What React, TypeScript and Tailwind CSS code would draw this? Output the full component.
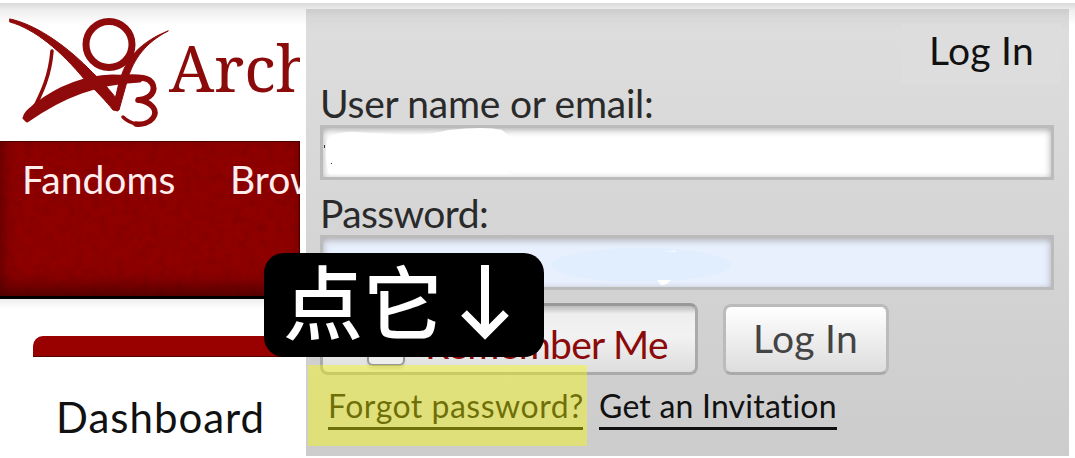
import type { ReactNode } from "react";

const ui = "font-['Lato','Liberation_Sans',sans-serif] whitespace-nowrap";

function Logo() {
  return (
    <svg className="block h-[112px] w-[164px] shrink-0" viewBox="8 16 164 112" fill="none" stroke="#8f0a0a" strokeLinecap="round" strokeLinejoin="round">
      <circle cx="109" cy="44.5" r="23" strokeWidth="7" />
      <path fill="#8f0a0a" strokeWidth="1" d="M10 19 C34 24 63 43 88 68 C101 81 111 90 120 104 L118 111 L113 110 C106 101 97 92 85 80 C61 51 35 29 10 22 Z" />
      <path fill="#8f0a0a" strokeWidth="1" d="M168 31 C145 43 134 59 128 78 L119 110 L113 107 L120 82 C124 59 142 41 168 31 Z" />
      <path strokeWidth="3.5" d="M52 51 C50 75 43 91 31 114" />
      <path fill="#8f0a0a" strokeWidth="3" d="M24 118 C25 113 29 110 35 105 C56 89 80 77 112 76 L144 77 L140 81 C97 83 64 95 27 121 Z" />
      <path strokeWidth="6" d="M112 79 C124 77 142 76 149 80 C157 86 155 98 139 100" />
      <path strokeWidth="5.5" d="M138 100 C153 102 158 111 153 118 C149 123 142 125 136 124" />
      <path strokeWidth="3.5" d="M137 124 C130 123 126 120 123 117" />
      <path strokeWidth="6" d="M101 83 L116 107 L121 85" />
    </svg>
  );
}

function Field({ label, labelClass, children, tint }: { label: string; labelClass: string; children?: ReactNode; tint?: boolean }) {
  return (
    <div className="h-[110px]">
      <div className={`${ui} ${labelClass} h-[41px] text-[39px] leading-[38px] text-[#2a2a2a]`}>{label}</div>
      <div className={`${tint ? "bg-[#e8effd]" : "bg-white"} h-[55px] w-[734px] overflow-hidden border-[3px] border-[#bbb] shadow-[inset_0_2px_7px_#aaa]`}>{children}</div>
    </div>
  );
}

export default function App() {
  return (
    <div className="relative h-[458px] w-[1075px] overflow-hidden bg-white pt-[3px]">
      <div className="flex h-[453px] bg-[linear-gradient(#d9d9d9,#eee_7px,#fff_22px)]">
        <div className="flex w-[300px] shrink-0 flex-col overflow-hidden">
          <header className="flex h-[138px] shrink-0 pt-[13px] pl-2">
            <Logo />
            <span className="-ml-[3px] pt-[12px] font-['Noto_Serif','Liberation_Serif',serif] text-[64px] leading-[80px] text-[#8b0a0a]">Archive</span>
          </header>
          <nav className="relative flex h-[158px] shrink-0 overflow-hidden border-b-[3px] border-black bg-[#8f0000] pt-[14px] pl-[22px] shadow-[inset_0_-16px_20px_-8px_#4d0000,inset_8px_0_16px_-8px_#600000,inset_-1px_1px_1px_#400]">
            <svg className="absolute inset-0 h-full w-full opacity-15">
              <filter id="grain" x="0" y="0" width="100%" height="100%">
                <feTurbulence type="fractalNoise" baseFrequency="0.12" numOctaves={3} seed={4} />
                <feColorMatrix values="0 0 0 0 0.03  0 0 0 0 0  0 0 0 0 0  1.8 0 0 0 -0.75" />
              </filter>
              <rect width="100%" height="100%" filter="url(#grain)" />
            </svg>
            <span className={`${ui} relative w-[208px] shrink-0 text-[39px] leading-[48px] text-[#fee]`}>Fandoms</span>
            <span className={`${ui} relative text-[39px] leading-[48px] text-[#fee]`}>Browse</span>
          </nav>
          <div className="h-[37px] shrink-0 bg-[linear-gradient(#eee,#fff_10px)]" />
          <div className="ml-[33px] h-[21px] shrink-0 rounded-tl-[10px] border-b border-[#500] bg-[#900]" />
          <div className={`${ui} pt-[35px] pl-[56px] text-[42px] leading-[50px] tracking-[1px] text-[#111]`}>Dashboard</div>
        </div>
        <section className="mt-[6px] ml-[6px] h-[447px] w-[763px] shrink-0 bg-[linear-gradient(#ccc,#d8d8d8_9px,#ddd_24px,#ccc)] px-[14px]">
          <div className="-mr-[6px] flex h-[75px] justify-end pt-[15px]">
            <div className={`${ui} h-[60px] w-[160px] bg-[#ddd] pl-[28px] text-[39px] leading-[53px] tracking-[0.3px] text-[#111]`}>Log In</div>
          </div>
          <Field label="User name or email:" labelClass="tracking-[-0.25px]">
            <svg className="block h-[49px] w-[200px]" viewBox="0 0 200 49">
              <path fill="white" d="M5 10 Q16 3 29 4 L71 6 Q105 8 125 2 Q163-2 179 2 L186 8 V46 H6 Q0 24 5 10Z" />
              <path stroke="#333" fill="none" d="M1.5 17 v3 M8 35.5 h1" />
            </svg>
          </Field>
          <Field label="Password:" labelClass="tracking-[-0.6px]" tint>
            <svg className="block h-[49px] w-full">
              <ellipse cx="318" cy="27" rx="90" ry="17" fill="#e1eefe" />
              <path fill="white" d="M334 42 h14 q-5 6-10 5z M339 13.5 l14-1 v1z" />
            </svg>
          </Field>
          <div className="flex">
            <div className={`${ui} mt-[-1px] h-[72px] w-[378px] shrink-0 rounded-[8px] border-[3px] border-[#aaa] border-t-[#999] bg-[linear-gradient(#bbb,#eee_8px,#f2f2f2_45%,#ddd)] pl-[102px] text-[39px] leading-[76px] tracking-[-0.7px] text-[#8b0a0a]`}>Remember Me</div>
            <button className={`${ui} ml-[25px] h-[71px] w-[166px] rounded-[8px] border-[3px] border-[#bbb] border-b-[#aaa] bg-[linear-gradient(#fff,#ddd)] pl-[27px] text-left text-[39px] leading-[60px] tracking-[0.3px] text-[#444]`}><span className="relative -top-[2px]">Log In</span></button>
          </div>
          <div className="flex gap-[16px] pt-[12px] pl-[8px] text-[#111]">
            <a className={`${ui} h-[43px] w-[255px] border-b-[3px] border-[#111] text-[32px] leading-[38px] tracking-[0.5px]`}>Forgot password?</a>
            <a className={`${ui} h-[43px] w-[238px] border-b-[3px] border-[#111] text-[32px] leading-[38px] tracking-[0.2px]`}>Get an Invitation</a>
          </div>
        </section>
      </div>
      <div className="absolute top-[334px] left-[367px] h-[32px] w-[38px] rounded-[6px] border-2 border-[#999] bg-[#eee] shadow-[0_3px_2px_#ccc]" />
      <div className="absolute top-[365px] left-[308px] h-[81px] w-[279px] bg-[#fdfd0066]" />
      <div className="absolute top-[253px] left-[264px] flex h-[104px] w-[280px] rounded-[20px] bg-black pl-[19px] font-['Noto_Sans_CJK_SC',sans-serif] text-[80px] leading-[91px] font-medium whitespace-nowrap text-white">
        点它
        <svg className="mt-[11px] ml-[18px] h-[76px] w-[48px] shrink-0" viewBox="0 0 48 76" fill="none" stroke="white" strokeWidth="8">
          <path d="M24 1v68M3 49l21 21 21-21" />
        </svg>
      </div>
    </div>
  );
}
